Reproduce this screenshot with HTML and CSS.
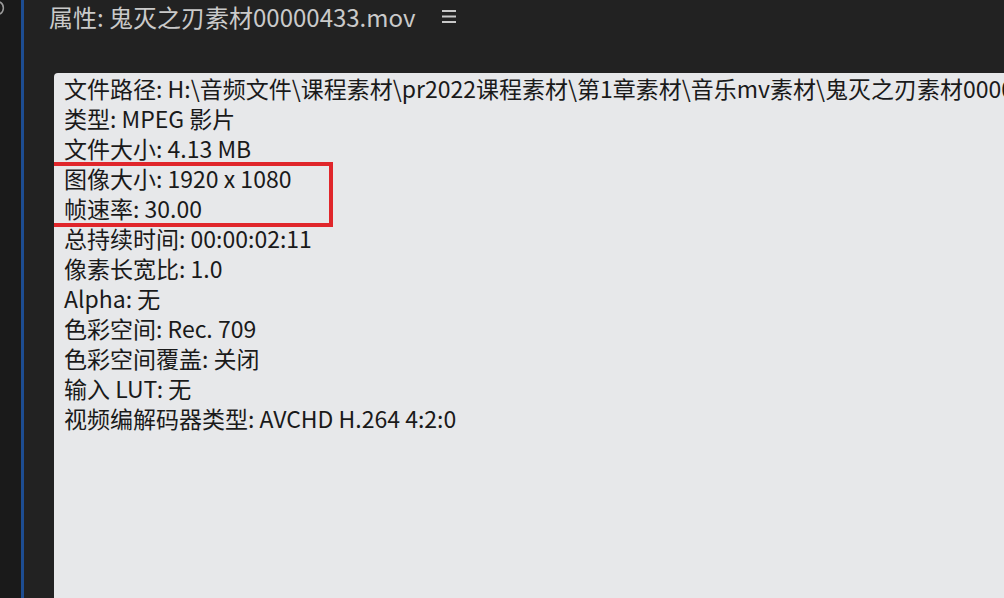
FILE: index.html
```html
<!DOCTYPE html>
<html lang="zh-CN">
<head>
<meta charset="utf-8">
<link rel="stylesheet" href="styles.css">
</head>
<body>
<div class="app">
  <div class="side">
    <svg class="side-icon" width="10" height="16" viewBox="0 0 10 16">
      <path d="M1 2 A7 7 0 0 1 1 14" fill="none" stroke="#9a9a9a" stroke-width="1.5"/>
    </svg>
  </div>
  <div class="divider"></div>
  <div class="main">
    <div class="header">
      <span class="title">属性: 鬼灭之刃素材00000433.mov</span>
      <svg class="menu" width="14" height="13" viewBox="0 0 14 13">
        <rect x="0" y="0" width="14" height="2" fill="#c8c8c8"/>
        <rect x="0" y="5.5" width="14" height="2" fill="#c8c8c8"/>
        <rect x="0" y="11" width="14" height="2" fill="#c8c8c8"/>
      </svg>
    </div>
    <div class="props">
      <div class="highlight"></div>
      <div class="line">文件路径: H:\音频文件\课程素材\pr2022课程素材\第1章素材\音乐mv素材\鬼灭之刃素材00000433.mov</div>
      <div class="line">类型: MPEG 影片</div>
      <div class="line">文件大小: 4.13 MB</div>
      <div class="line">图像大小: 1920 x 1080</div>
      <div class="line">帧速率: 30.00</div>
      <div class="line">总持续时间: 00:00:02:11</div>
      <div class="line">像素长宽比: 1.0</div>
      <div class="line">Alpha: 无</div>
      <div class="line">色彩空间: Rec. 709</div>
      <div class="line">色彩空间覆盖: 关闭</div>
      <div class="line">输入 LUT: 无</div>
      <div class="line">视频编解码器类型: AVCHD H.264 4:2:0</div>
    </div>
  </div>
</div>
</body>
</html>
```

FILE: styles.css
```css
html, body {
  margin: 0;
  padding: 0;
  width: 1004px;
  height: 598px;
  overflow: hidden;
  background: #1f1f1f;
}

.app {
  display: flex;
  height: 598px;
  font-family: "Noto Sans CJK SC", "Noto Sans", sans-serif;
}

.side {
  width: 21px;
  background: #1a1a1a;
  flex: none;
  overflow: hidden;
}

.side-icon {
  display: block;
  margin: 0 0 0 -1px;
}

.divider {
  width: 3px;
  flex: none;
  background: #1d4d92;
}

.main {
  flex: 1;
  background: #222222;
  display: flex;
  flex-direction: column;
  min-width: 0;
  padding-left: 30px;
}

.header {
  height: 73px;
  display: flex;
  align-items: flex-start;
  gap: 27px;
}

.title {
  color: #cacaca;
  font-size: 24px;
  line-height: 34px;
  margin-left: -5px;
}

.menu {
  margin-top: 10px;
}

.props {
  position: relative;
  flex: 1;
  background: #e7e8ea;
  border-top-left-radius: 4px;
  padding: 0 0 0 10px;
  white-space: nowrap;
  overflow: hidden;
  color: #1a1a1a;
}

.line {
  font-size: 23px;
  line-height: 30px;
  height: 30px;
}

.highlight {
  position: absolute;
  left: -7px;
  top: 89px;
  width: 278px;
  height: 57px;
  border: 4px solid #e0262b;
}
```
